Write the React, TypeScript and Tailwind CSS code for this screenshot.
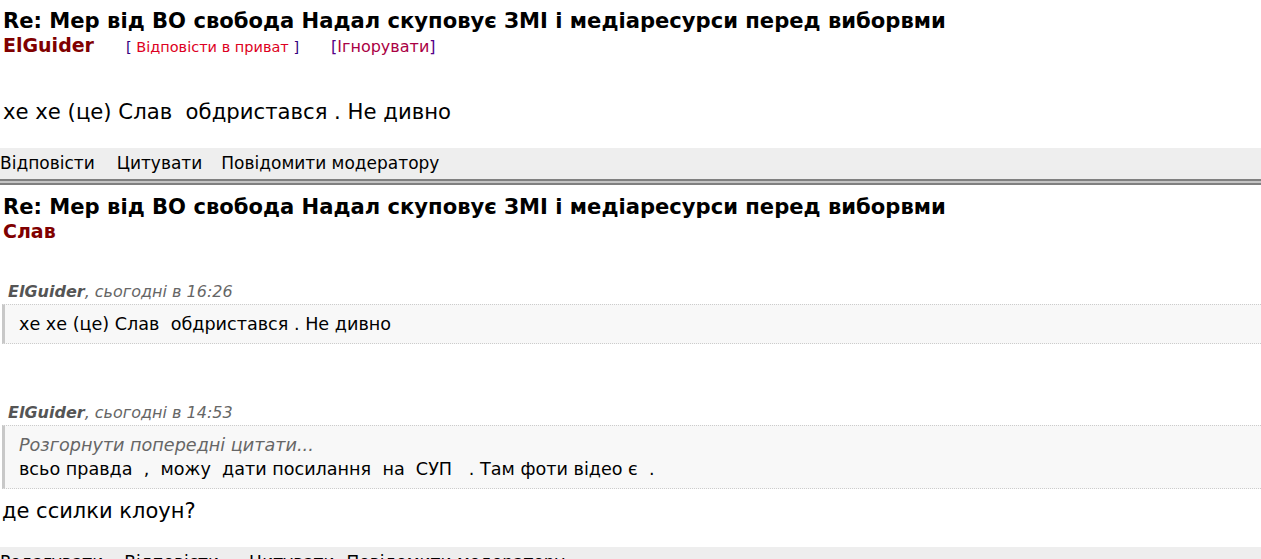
const font = { fontFamily: '"DejaVu Sans", Verdana, sans-serif' };

const Separator = () => (
  <div className="flex flex-col">
    <div className="h-[2px] bg-[#808080]" />
    <div className="h-[2px] bg-[#c4c4c4]" />
    <div className="h-[2px] bg-[#808080]" />
  </div>
);

const Quote = ({
  author,
  time,
  children,
}: {
  author: string;
  time: string;
  children: React.ReactNode;
}) => (
  <div>
    <div className="pl-[8px] text-[16px] italic leading-[20px] text-[#666666]">
      <b className="text-[#555555]">{author}</b>, {time}
    </div>
    <div className="mt-[2px] ml-[2px] border-y border-l-[3px] border-dotted border-y-[#cccccc] border-l-[#c8c8c8] bg-[#f8f8f8] py-[8px] pl-[14px] text-[17.6px] leading-[22px] text-black [border-left-style:solid]">
      {children}
    </div>
  </div>
);

export default function App() {
  return (
    <div style={font} className="min-h-[559px] w-[1261px] overflow-hidden bg-white text-black">
      <div className="pl-[3px] pt-[8px]">
        <h1 className="text-[21.1px] font-bold leading-[25px]">
          Re: Мер від ВО свобода Надал скуповує ЗМІ і медіаресурси перед виборвми
        </h1>
        <div className="flex items-baseline">
          <span className="text-[19px] font-bold leading-[24px] text-[#800000]">ElGuider</span>
          <span className="ml-[32px] text-[14.5px] text-[#330080]">
            [ <span className="text-[#dd0022]">Відповісти в приват</span> ]
          </span>
          <span className="ml-[32px] text-[16px] text-[#550088]">
            [<span className="text-[#aa0044]">Ігнорувати</span>]
          </span>
        </div>
        <p className="mt-[40px] whitespace-pre text-[21.2px] leading-[26px]">
          хе хе (це) Слав  обдристався . Не дивно
        </p>
      </div>
      <div className="mt-[23px]">
        <div className="flex h-[31px] items-center bg-[#eeeeee] text-[17px]">
          <span>Відповісти</span>
          <span className="ml-[22px]">Цитувати</span>
          <span className="ml-[19px]">Повідомити модератору</span>
        </div>
        <Separator />
      </div>
      <div className="pl-[3px] pt-[9px]">
        <h1 className="text-[21.1px] font-bold leading-[25px]">
          Re: Мер від ВО свобода Надал скуповує ЗМІ і медіаресурси перед виборвми
        </h1>
        <div className="text-[19px] font-bold leading-[24px] text-[#800000]">Слав</div>
      </div>
      <div className="mt-[39px] flex flex-col">
        <Quote author="ElGuider" time="сьогодні в 16:26">
          <span className="whitespace-pre">хе хе (це) Слав  обдристався . Не дивно</span>
        </Quote>
        <div className="mt-[59px]">
          <Quote author="ElGuider" time="сьогодні в 14:53">
            <div className="-my-[1px] leading-[24px]">
              <div className="italic text-[#666666]">Розгорнути попередні цитати...</div>
              <div className="whitespace-pre">всьо правда  ,  можу  дати посилання  на  СУП   . Там фоти відео є  .</div>
            </div>
          </Quote>
        </div>
        <p className="mt-[9px] pl-[2px] text-[21px] leading-[26px]">де ссилки клоун?</p>
        <div className="mt-[23px] flex h-[31px] items-center bg-[#eeeeee] text-[17px]">
          <span>Редагувати</span>
          <span className="ml-[21px]">Відповісти</span>
          <span className="ml-[30px]">Цитувати</span>
          <span className="ml-[12px]">Повідомити модератору</span>
        </div>
      </div>
    </div>
  );
}
